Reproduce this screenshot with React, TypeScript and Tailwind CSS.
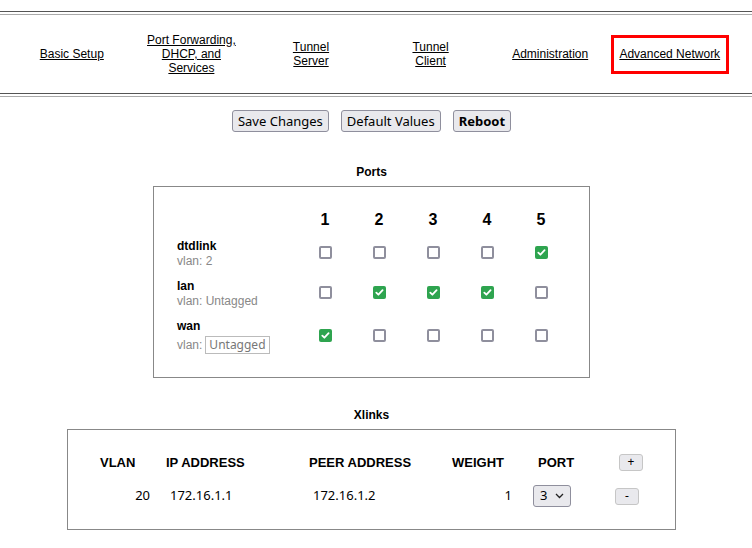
import React from "react";

const ui = "font-['Noto_Sans','Open_Sans',sans-serif]";

const ports = [
  { name: "dtdlink", vlan: "2", checks: [false, false, false, false, true] },
  { name: "lan", vlan: "Untagged", checks: [false, true, true, true, false] },
  { name: "wan", vlan: null, checks: [true, false, false, false, false] },
];

function Check({ on }: { on: boolean }) {
  if (on) {
    return (
      <span className="flex h-[13px] w-[13px] items-center justify-center rounded-[2px] bg-[#2ea44f]">
        <svg width="11" height="11" viewBox="0 0 11 11" fill="none">
          <path d="M2.3 5.6 L4.4 7.7 L8.6 3.2" stroke="white" strokeWidth="1.8" strokeLinecap="round" strokeLinejoin="round" />
        </svg>
      </span>
    );
  }
  return <span className="block h-[13px] w-[13px] rounded-[2px] border-2 border-[#8f8f9d] bg-white" />;
}

function Rule() {
  return <div className="h-[4px] w-full border-t border-b border-t-[#555] border-b-[#aaa]" />;
}

function NavLink({ lines, active }: { lines: string[]; active?: boolean }) {
  return (
    <div className="flex items-center justify-center">
      <div
        className={
          active
            ? "mx-[1px] flex h-[39px] w-[118px] items-center justify-center border-[3px] border-[#ff0000]"
            : "flex items-center justify-center"
        }
      >
        <a href="#" className="text-center leading-[14px] text-black underline">
          {lines.map((l, i) => (
            <span key={i} className="block">
              {l}
            </span>
          ))}
        </a>
      </div>
    </div>
  );
}

function Btn({ children, bold }: { children: React.ReactNode; bold?: boolean }) {
  return (
    <button
      className={`${ui} h-[22px] rounded-[3px] border border-[#8f8f9d] bg-[#e9e9ed] px-[5px] text-[13px] leading-[20px] text-black ${bold ? "font-bold" : ""}`}
    >
      {children}
    </button>
  );
}

export default function App() {
  return (
    <div className="w-full bg-white font-['Liberation_Sans',Arial,sans-serif] text-[12px] text-black">
      <div className="h-[11px]" />
      <Rule />
      <div className="ml-[12px] grid h-[78px] grid-cols-[repeat(6,119.6px)] items-center">
        <NavLink lines={["Basic Setup"]} />
        <NavLink lines={["Port Forwarding,", "DHCP, and", "Services"]} />
        <NavLink lines={["Tunnel", "Server"]} />
        <NavLink lines={["Tunnel", "Client"]} />
        <NavLink lines={["Administration"]} />
        <NavLink lines={["Advanced Network"]} active />
      </div>
      <Rule />

      <div className="w-[743px]">
        <div className="mt-[13px] flex justify-center gap-[12px]">
          <Btn>Save Changes</Btn>
          <Btn>Default Values</Btn>
          <Btn bold>Reboot</Btn>
        </div>

        <div className="mt-[33px] text-center font-bold leading-[14px]">Ports</div>
        <div className="mx-auto mt-[7px] h-[192px] w-[437px] border border-[#888] pl-[23px] pt-[22px]">
          <div className="flex h-[22px] items-center">
            <div className="w-[121px]" />
            {[1, 2, 3, 4, 5].map((n) => (
              <div key={n} className="w-[54px] text-center text-[16px] font-bold">
                {n}
              </div>
            ))}
          </div>
          <div className="mt-[8px] flex flex-col gap-[10px]">
            {ports.map((p) => (
              <div key={p.name} className="flex items-center">
                <div className="w-[121px]">
                  <div className="font-bold leading-[14px]">{p.name}</div>
                  {p.vlan ? (
                    <div className="leading-[16px] text-[#888]">vlan: {p.vlan}</div>
                  ) : (
                    <div className="mt-[3px] flex items-center leading-[16px] text-[#888]">
                      vlan:
                      <span className={`${ui} ml-[3px] flex h-[18px] w-[65px] items-center border border-[#bbb] px-[3px] text-[12px] text-[#777]`}>
                        Untagged
                      </span>
                    </div>
                  )}
                </div>
                {p.checks.map((c, i) => (
                  <div key={i} className={`flex w-[54px] justify-center ${p.vlan ? "pb-[4px]" : "pb-[2px]"}`}>
                    <Check on={c} />
                  </div>
                ))}
              </div>
            ))}
          </div>
        </div>

        <div className="mt-[30px] text-center font-bold leading-[14px]">Xlinks</div>
        <div className="mx-auto mt-[7px] h-[101px] w-[609px] border border-[#888] pl-[32px] pt-[23px]">
          <div className="flex h-[20px] items-center text-[13px] font-bold">
            <div className="w-[62px]">VLAN</div>
            <div className="w-[143px] pl-[4px]">IP ADDRESS</div>
            <div className="w-[143px] pl-[4px]">PEER ADDRESS</div>
            <div className="w-[72px] pl-[4px]">WEIGHT</div>
            <div className="w-[86px] pl-[18px]">PORT</div>
            <div className="pl-[13px]">
              <button className={`${ui} mb-[2px] flex h-[17px] w-[24px] items-center justify-center rounded-[3px] border border-[#c6c6c6] bg-[#e9e9ed] text-[12px] font-normal`}>
                +
              </button>
            </div>
          </div>
          <div className={`${ui} mt-[11px] flex h-[24px] items-center text-[13px]`}>
            <div className="w-[50px] text-right">20</div>
            <div className="w-[155px] pl-[20px]">172.16.1.1</div>
            <div className="w-[143px] pl-[8px]">172.16.1.2</div>
            <div className="w-[68px] pr-[4px] text-right">1</div>
            <div className="w-[86px] pl-[17px]">
              <span className="flex h-[22px] w-[38px] items-center justify-between rounded-[3px] border border-[#8f8f9d] bg-[#e9e9ed] pl-[6px] pr-[6px]">
                3
                <svg width="9" height="6" viewBox="0 0 9 6" fill="none">
                  <path d="M1 1 L4.5 4.5 L8 1" stroke="#222" strokeWidth="1.3" />
                </svg>
              </span>
            </div>
            <div className="pl-[13px]">
              <button className="flex h-[17px] w-[24px] items-center justify-center rounded-[3px] border border-[#c6c6c6] bg-[#e9e9ed] text-[12px]">
                -
              </button>
            </div>
          </div>
        </div>
      </div>
    </div>
  );
}
